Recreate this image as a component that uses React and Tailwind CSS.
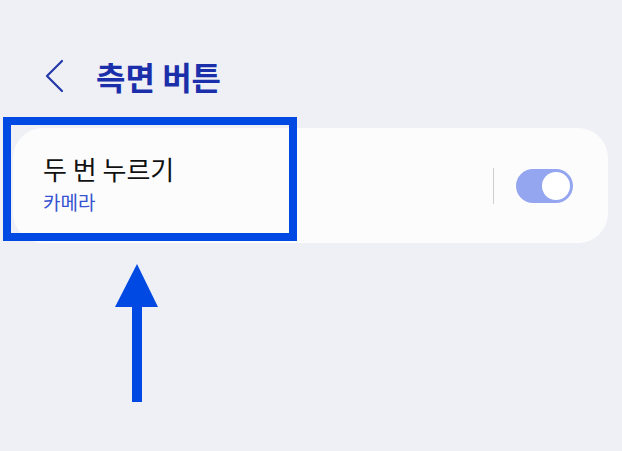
import React from 'react';

export default function App() {
  return (
    <div
      className="relative w-[622px] h-[451px] overflow-hidden bg-[#eef0f6]"
      style={{ fontFamily: '"Noto Sans CJK KR", "Noto Sans", sans-serif' }}
    >
      {/* Header */}
      <div className="flex items-center h-[34px] mt-[59px] pl-[45px]">
        <svg width="20" height="34" viewBox="0 0 20 34" fill="none">
          <path d="M17 2 L2 17 L17 32" stroke="#2438a8" strokeWidth="2.2" strokeLinecap="round" strokeLinejoin="round" />
        </svg>
        <h1 className="ml-[31px] text-[32px] font-bold leading-none text-[#1b2faa]">측면 버튼</h1>
      </div>

      {/* Card */}
      <div className="mt-[35px] ml-[13px] mr-[14px] h-[115px] rounded-[30px] bg-[#fcfcfd] flex items-center pl-[30px] pr-[35px]">
        <div className="flex-1 flex flex-col">
          <span className="text-[26px] leading-[32px] text-[#111] mt-[-4px]">두 번 누르기</span>
          <span className="text-[19px] leading-[24px] text-[#3552d0] mt-[5px]">카메라</span>
        </div>
        <div className="w-[1.5px] h-[36px] bg-[#cfcfd3] mr-[22px]" />
        <div className="w-[57px] h-[34px] rounded-full bg-[#94a6f0] flex items-center justify-end pr-[3px]">
          <div className="w-[28px] h-[28px] rounded-full bg-white" />
        </div>
      </div>

      {/* Annotation box */}
      <div className="absolute left-[3px] top-[117px] w-[294px] h-[124px] border-[8px] border-[#0049e3]" />

      {/* Annotation arrow */}
      <svg className="absolute left-[110px] top-[260px]" width="54" height="145" viewBox="0 0 54 145">
        <polygon points="27,4 48,47 5,47" fill="#0049e3" />
        <rect x="22" y="45" width="10" height="97" fill="#0049e3" />
      </svg>
    </div>
  );
}
